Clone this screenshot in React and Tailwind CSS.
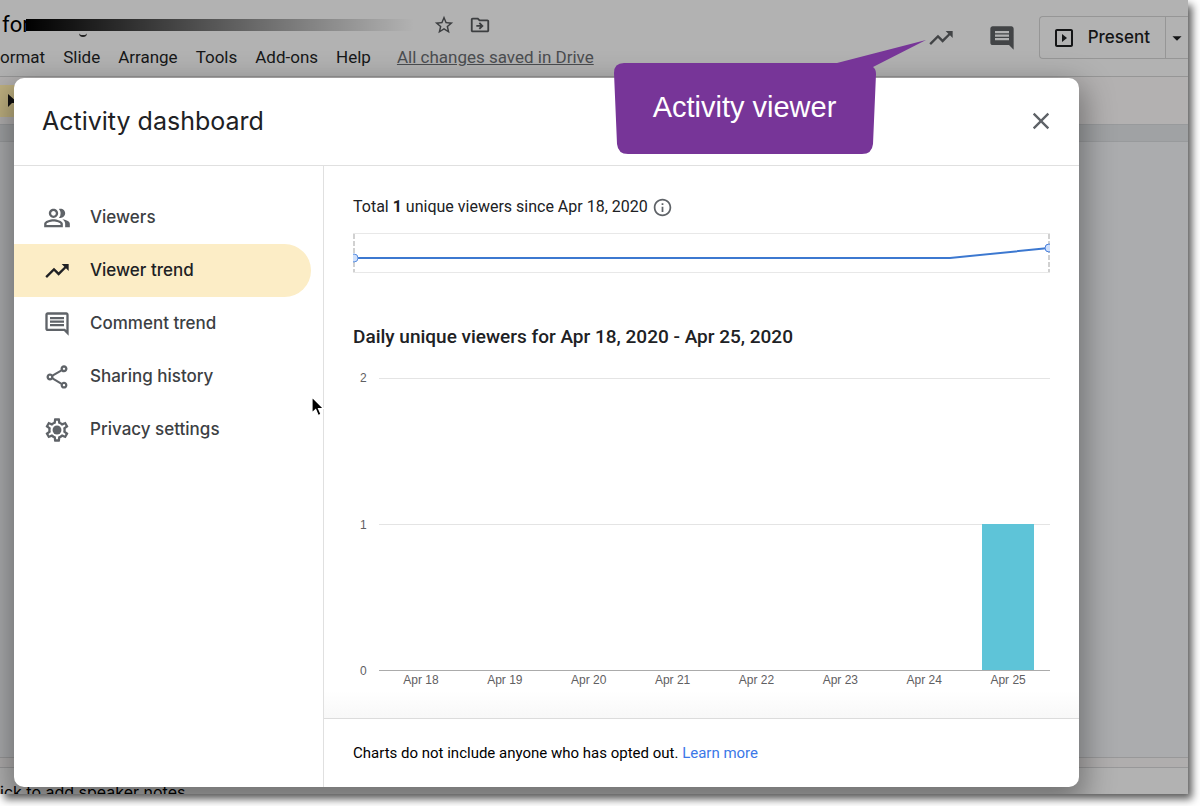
import React, { useState } from 'react';
import {
  MdStarBorder,
  MdOutlineDriveFileMove,
  MdTrendingUp,
  MdComment,
  MdOutlineComment,
  MdOutlineSlideshow,
  MdArrowDropDown,
  MdClose,
  MdOutlinePeopleAlt,
  MdOutlineShare,
  MdInfoOutline,
} from 'react-icons/md';

const MENU = ['ormat', 'Slide', 'Arrange', 'Tools', 'Add-ons', 'Help'];

const DAYS = [
  { label: 'Apr 18', viewers: 0 },
  { label: 'Apr 19', viewers: 0 },
  { label: 'Apr 20', viewers: 0 },
  { label: 'Apr 21', viewers: 0 },
  { label: 'Apr 22', viewers: 0 },
  { label: 'Apr 23', viewers: 0 },
  { label: 'Apr 24', viewers: 0 },
  { label: 'Apr 25', viewers: 1 },
];

const MAX_VIEWERS = 2;

// Gear with a solid hub
const GearIcon = ({ size = 28 }) => (
  <svg width={size} height={size} viewBox="0 0 24 24" fill="currentColor">
    <path d="M19.43 12.98c.04-.32.07-.64.07-.98 0-.34-.03-.66-.07-.98l2.11-1.65c.19-.15.24-.42.12-.64l-2-3.46c-.09-.16-.26-.25-.44-.25-.06 0-.12.01-.17.03l-2.49 1c-.52-.4-1.08-.73-1.69-.98l-.38-2.65C14.46 2.18 14.25 2 14 2h-4c-.25 0-.46.18-.49.42l-.38 2.65c-.61.25-1.17.59-1.69.98l-2.49-1c-.06-.02-.12-.03-.18-.03-.17 0-.34.09-.43.25l-2 3.46c-.13.22-.07.49.12.64l2.11 1.65c-.04.32-.07.65-.07.98 0 .33.03.66.07.98l-2.11 1.65c-.19.15-.24.42-.12.64l2 3.46c.09.16.26.25.44.25.06 0 .12-.01.17-.03l2.49-1c.52.4 1.08.73 1.69.98l.38 2.65c.03.24.24.42.49.42h4c.25 0 .46-.18.49-.42l.38-2.65c.61-.25 1.17-.59 1.69-.98l2.49 1c.06.02.12.03.18.03.17 0 .34-.09.43-.25l2-3.46c.12-.22.07-.49-.12-.64l-2.11-1.65zm-1.98-1.71c.04.31.05.52.05.73 0 .21-.02.43-.05.73l-.14 1.13.89.7 1.08.84-.7 1.21-1.27-.51-1.04-.42-.9.68c-.43.32-.84.56-1.25.73l-1.06.43-.16 1.13-.2 1.35h-1.4l-.19-1.35-.16-1.13-1.06-.43c-.43-.18-.83-.41-1.23-.71l-.91-.7-1.06.43-1.27.51-.7-1.21 1.08-.84.89-.7-.14-1.13c-.03-.31-.05-.54-.05-.74s.02-.43.05-.73l.14-1.13-.89-.7-1.08-.84.7-1.21 1.27.51 1.04.42.9-.68c.43-.32.84-.56 1.25-.73l1.06-.43.16-1.13.2-1.35h1.39l.19 1.35.16 1.13 1.06.43c.43.18.83.41 1.23.71l.91.7 1.06-.43 1.27-.51.7 1.21-1.07.85-.89.7.14 1.13z" />
    <circle cx="12" cy="12" r="3.8" />
  </svg>
);

const Pointer = () => (
  <svg width="16" height="22" viewBox="0 0 16 22">
    <path
      d="M2 1v16l3.700-3.500 2.500 6 2.800-1.200-2.500-5.800h5z"
      fill="#000"
      stroke="#fff"
      strokeWidth="1.200"
    />
  </svg>
);

const TABS = [
  { id: 'viewers', label: 'Viewers', icon: MdOutlinePeopleAlt },
  { id: 'trend', label: 'Viewer trend', icon: MdTrendingUp },
  { id: 'comments', label: 'Comment trend', icon: MdOutlineComment },
  { id: 'sharing', label: 'Sharing history', icon: MdOutlineShare },
  { id: 'privacy', label: 'Privacy settings', icon: GearIcon },
];

const EditorHeader = () => (
  <header className="flex h-[77px] items-start justify-between border-b border-[#969696] bg-[#b2b2b2]">
    <div className="min-w-0">
      <div className="flex h-[46px] items-center pt-1 pl-0.5">
        <span className="text-[22px] leading-6 text-black">for</span>
        {/* Redacted title, with the tail of a letter showing below */}
        <div className="relative -ml-1 h-3 w-[388px] bg-linear-to-r from-black to-transparent">
          <span className="absolute top-3.5 left-[53px] h-1 w-2 rounded-b-full border-b-2 border-[#222]" />
        </div>
        <div className="ml-[19px] flex items-center gap-3 text-[#3c3e40]">
          <button aria-label="Star">
            <MdStarBorder size={22} />
          </button>
          <button aria-label="Move" className="ml-0.5">
            <MdOutlineDriveFileMove size={22} />
          </button>
        </div>
      </div>
      <nav className="flex items-center gap-[18px] text-[17px] leading-[22px] text-[#161718]">
        {MENU.map((item) => (
          <button key={item}>{item}</button>
        ))}
        <a href="#history" className="ml-2 whitespace-nowrap text-[#4b4d50] underline">
          All changes saved in Drive
        </a>
      </nav>
    </div>

    <div className="flex shrink-0 items-center pt-4 text-[#424446]">
      <button aria-label="Activity dashboard">
        <MdTrendingUp size={28} />
      </button>
      <button aria-label="Comments" className="ml-[33px]">
        <MdComment size={28} />
      </button>
      <div className="ml-[23px] flex h-[43px] rounded-l border border-r-0 border-[#969696] text-[#141516]">
        <button className="flex items-center gap-3 pr-[15px] pl-3 font-['Inter',sans-serif] text-[17px] font-medium">
          <MdOutlineSlideshow size={24} />
          Present
        </button>
        <button aria-label="Present options" className="border-l border-[#969696]">
          <MdArrowDropDown size={22} />
        </button>
      </div>
    </div>
  </header>
);

const Editor = () => (
  <div className="flex min-h-[794px] flex-col">
    <EditorHeader />
    <div className="h-[47px] bg-[#b3b1b1] pt-2">
      <div className="flex h-8 w-8 items-center bg-[#bfb181] pl-1.5">
        <svg width="14" height="16" viewBox="0 0 14 16">
          <path d="M2 1v13l4-4h6z" fill="#111" />
        </svg>
      </div>
    </div>
    <div className="h-[18px] border-y border-[#989a9c] bg-[#a0a2a4]" />
    <div className="flex-1 bg-[#abacae]" />
    <div className="h-[11px] border-y border-[#989899] bg-[#b0aeae]" />
    <div className="h-[26px] overflow-hidden bg-[#b2b2b2]">
      <p className="pt-3 font-['Inter',sans-serif] text-base leading-6 whitespace-nowrap text-black">
        ick to add speaker notes
      </p>
    </div>
  </div>
);

const Sparkline = () => (
  <svg viewBox="0 0 697 40" className="mt-3.5 block w-full" fill="none">
    <path d="M0 .5H697M0 39.500H697" stroke="#e8e8e8" />
    <path d="M1 1V39M696 1V39" stroke="#a3a3a3" strokeDasharray="5 2" />
    <path d="M1 25H597L696 15" stroke="#3c78d0" strokeWidth="2" />
    <circle cx="1" cy="25" r="4" fill="#cfe0fb" stroke="#5b8fe0" />
    <circle cx="696" cy="15" r="4" fill="#cfe0fb" stroke="#4a80dc" />
  </svg>
);

const DailyChart = () => (
  <div className="mt-[29px] grid grid-cols-[26px_1fr] font-['Liberation_Sans',sans-serif] text-xs leading-4 text-[#5f6062]">
    <div className="-my-2 flex flex-col justify-between pl-[7px]">
      <span>2</span>
      <span>1</span>
      <span>0</span>
    </div>
    <div className="grid h-[293px]">
      <div className="col-start-1 row-start-1 flex flex-col justify-between">
        <div className="h-px bg-[#e4e4e4]" />
        <div className="h-px bg-[#e4e4e4]" />
        <div className="h-px bg-[#ababab]" />
      </div>
      <div className="col-start-1 row-start-1 grid grid-cols-8 items-end pb-px">
        {DAYS.map((day) => (
          <div
            key={day.label}
            className="mx-4 bg-[#5ec4d8]"
            style={{ height: `${(day.viewers / MAX_VIEWERS) * 100}%` }}
          />
        ))}
      </div>
    </div>
    <div className="col-start-2 grid grid-cols-8 pt-px text-center">
      {DAYS.map((day) => (
        <span key={day.label}>{day.label}</span>
      ))}
    </div>
  </div>
);

const ActivityDialog = () => {
  const [activeTab, setActiveTab] = useState('trend');

  return (
    <section
      role="dialog"
      aria-labelledby="dialog-title"
      className="absolute top-[78px] right-[109px] left-3.5 overflow-hidden rounded-[10px] bg-white shadow-[0_12px_30px_6px_rgba(0,0,0,0.35)]"
    >
      <div className="flex h-[88px] items-center justify-between border-b border-[#e0e0e0] pr-6 pb-0.5 pl-7">
        <h1 id="dialog-title" className="font-['Inter',sans-serif] text-[25px] leading-8 text-[#202124]">
          Activity dashboard
        </h1>
        <button aria-label="Close" className="text-[#5f6368]">
          <MdClose size={28} />
        </button>
      </div>

      <div className="flex">
        <nav className="w-[310px] shrink-0 border-r border-[#e0e0e0] pt-[25px]">
          {TABS.map(({ id, label, icon: Icon }) => (
            <button
              key={id}
              onClick={() => setActiveTab(id)}
              className={`flex h-[53px] w-[297px] items-center gap-[19px] rounded-r-full pl-[29px] font-['Inter',sans-serif] text-[17px] font-medium ${
                id === activeTab ? 'bg-[#fcedc6] text-[#202124]' : 'text-[#5f6368]'
              }`}
            >
              <Icon size={28} />
              <span className={id === activeTab ? '' : 'text-[#3c4043]'}>{label}</span>
            </button>
          ))}
        </nav>

        <div className="min-w-0 flex-1">
          <div className="bg-linear-to-t from-[#f8f8f8] to-white to-5% px-[29px] pt-[29px] pb-[30px] text-[#202124]">
            <div className="flex items-center gap-1 text-base leading-6">
              <p>
                Total <b>1</b> unique viewers since Apr 18, 2020
              </p>
              <MdInfoOutline size={21} className="text-[#5f6368]" />
            </div>
            <Sparkline />
            <h2 className="mt-[52px] text-[19px] leading-6 font-medium">
              Daily unique viewers for Apr 18, 2020 - Apr 25, 2020
            </h2>
            <DailyChart />
          </div>
          <footer className="border-t border-[#dcdcdc] py-[22px] pl-[29px] text-[15px] leading-6 text-black">
            Charts do not include anyone who has opted out.{' '}
            <a href="#learn" className="text-[#3b78e7]">
              Learn more
            </a>
          </footer>
        </div>
      </div>
    </section>
  );
};

const Callout = () => (
  <div className="absolute top-[38px] right-[262px] h-[116px] w-[313px]">
    <svg viewBox="0 0 313 116" className="block w-full">
      <path
        d="M11 25H224L313 2L260 29Q263 31 263 36L260 106Q259 116 249 116H15Q5 116 4 106L1 35Q1 25 11 25Z"
        fill="#773598"
      />
    </svg>
    <p className="absolute top-[53px] left-0 w-[263px] text-center font-['Liberation_Sans',sans-serif] text-[29px] leading-8 text-white">
      Activity viewer
    </p>
  </div>
);

export default function App() {
  return (
    <div className="min-h-screen bg-white pr-3 pb-3 font-[Roboto,sans-serif]">
      <main className="relative overflow-hidden shadow-[4px_5px_8px_rgba(0,0,0,0.65)]">
        <Editor />
        <ActivityDialog />
        <Callout />
        <div className="pointer-events-none absolute top-[396px] left-[310px]">
          <Pointer />
        </div>
      </main>
    </div>
  );
}
